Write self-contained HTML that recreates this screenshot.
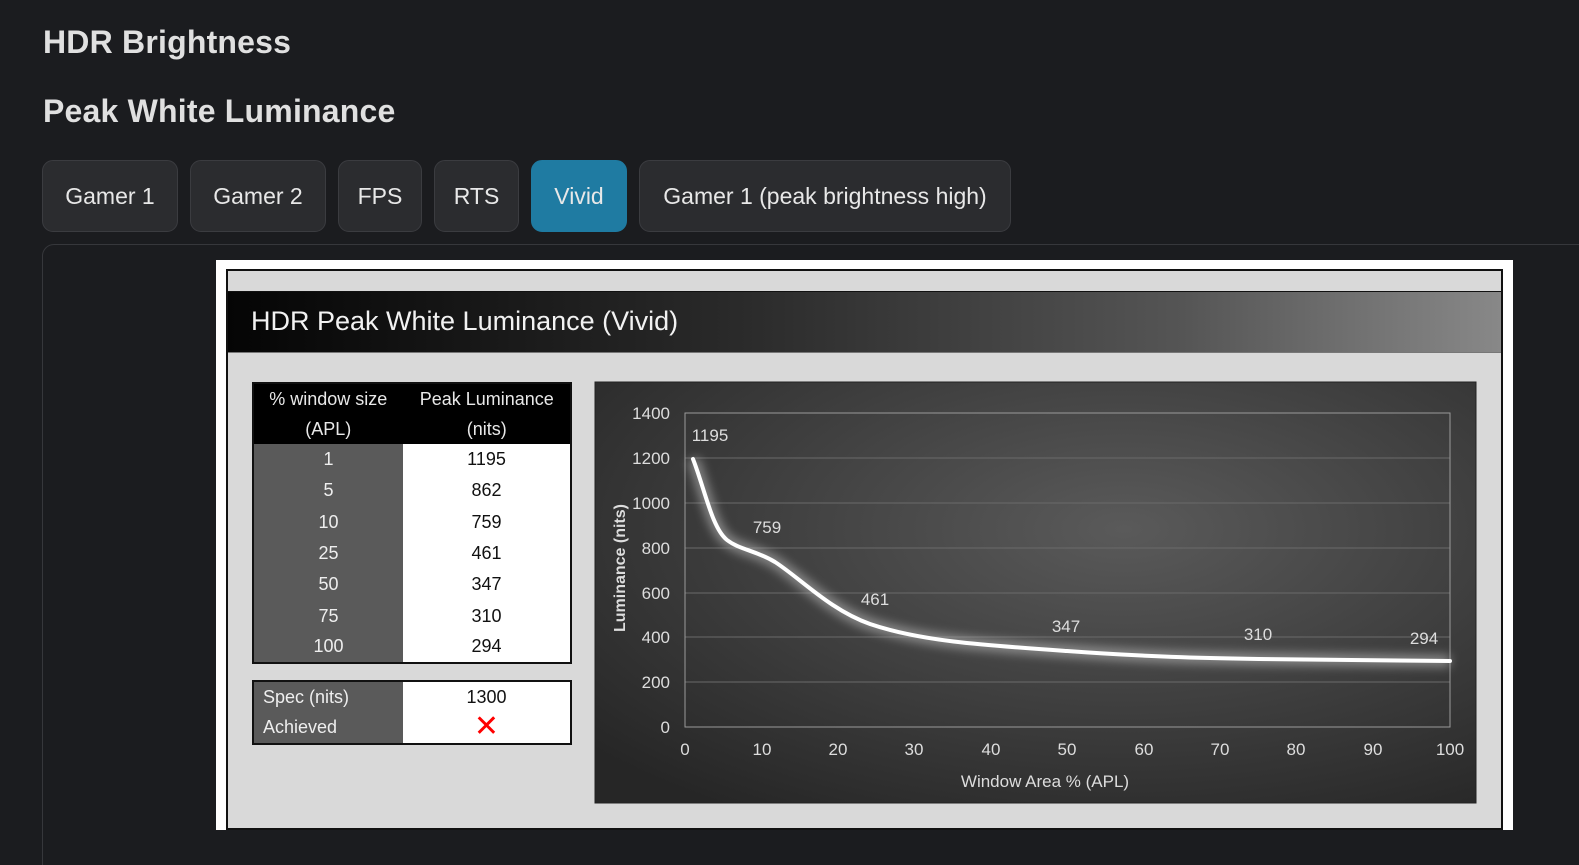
<!DOCTYPE html>
<html style="overflow:hidden;width:1579px;height:865px"><head><meta charset="utf-8"><style>
*{margin:0;padding:0;box-sizing:border-box}
body{width:1579px;height:865px;background:#1b1c1f;font-family:"Liberation Sans","DejaVu Sans",sans-serif;color:#e2e2e2;position:relative;overflow:hidden}
h1,h2{position:absolute;left:43px;font-weight:bold;font-size:32px;color:#e0e0e0;letter-spacing:0.2px}
h1{top:24px}h2{top:93px}
.tab{position:absolute;top:160px;height:72px;border-radius:11px;background:#2b2c2f;border:1px solid #3b3c40;color:#e8e8e8;font-size:23px;display:flex;align-items:center;justify-content:center}
.tab.on{background:#1f7ba2;border-color:#1f7ba2}
.panel{position:absolute;left:42px;top:244px;width:1560px;height:640px;border:1px solid #36373b;border-radius:12px}
.img{position:absolute;left:216px;top:260px;width:1297px;height:570px;background:#fff}
.frame{position:absolute;left:10px;top:9px;width:1277px;height:561px;border:2px solid #111;background:#d9d9d9}
.bar{position:absolute;left:0;top:20px;width:1273px;height:62px;background:linear-gradient(90deg,#050505 0%,#2a2a2a 40%,#555 75%,#888 100%);border-top:1px solid #111;border-bottom:1px solid #777}
.bar span{position:absolute;left:23px;top:14px;font-size:27px;color:#f2f2f2}
table{position:absolute;border-collapse:collapse;font-size:18px;text-align:center}
td{height:31.3px;padding:0}
.t1{left:24px;top:111px;width:320px;border:2px solid #111}
.t1 th{background:#000;color:#e8e8e8;font-weight:normal;height:61px;font-size:18px;line-height:30px}
.t1 td.l{background:#5a5a5a;color:#eee;width:150px}
.t1 td.r{background:#fff;color:#111}
.t2{left:24px;top:409px;width:320px;border:2px solid #111}
.t2 td.l{background:#5a5a5a;color:#eee;text-align:left;padding-left:9px;width:150px;height:31px}
.t2 td.r{background:#fff;color:#111}
</style></head><body>
<h1>HDR Brightness</h1>
<h2>Peak White Luminance</h2>
<div class="tab" style="left:42px;width:136px">Gamer 1</div>
<div class="tab" style="left:190px;width:136px">Gamer 2</div>
<div class="tab" style="left:338px;width:84px">FPS</div>
<div class="tab" style="left:434px;width:85px">RTS</div>
<div class="tab on" style="left:531px;width:96px">Vivid</div>
<div class="tab" style="left:639px;width:372px">Gamer 1 (peak brightness high)</div>
<div class="panel"></div>
<div class="img"><div class="frame">
<div class="bar"><span>HDR Peak White Luminance (Vivid)</span></div>
<table class="t1">
<tr><th style="border-right:1px solid #000">% window size<br>(APL)</th><th>Peak Luminance<br>(nits)</th></tr>
<tr><td class="l">1</td><td class="r">1195</td></tr>
<tr><td class="l">5</td><td class="r">862</td></tr>
<tr><td class="l">10</td><td class="r">759</td></tr>
<tr><td class="l">25</td><td class="r">461</td></tr>
<tr><td class="l">50</td><td class="r">347</td></tr>
<tr><td class="l">75</td><td class="r">310</td></tr>
<tr><td class="l">100</td><td class="r">294</td></tr>
</table>
<table class="t2">
<tr><td class="l">Spec (nits)</td><td class="r">1300</td></tr>
<tr><td class="l">Achieved</td><td class="r" style="color:#f00;font-size:30px;font-weight:bold;line-height:20px">✕</td></tr>
</table>
</div></div>
<svg style="position:absolute;left:0;top:0" width="1579" height="865">
<defs>
<radialGradient id="g" cx="0.6" cy="0.35" r="0.8"><stop offset="0" stop-color="#5a5a5a"/><stop offset="1" stop-color="#262626"/></radialGradient>
<filter id="bl"><feGaussianBlur stdDeviation="5"/></filter>
</defs>
<rect x="595" y="382" width="881" height="421" fill="url(#g)" stroke="#222"/>
<g stroke="#6a6a6a" stroke-width="1">
<line x1="685" y1="458" x2="1450" y2="458"/><line x1="685" y1="503" x2="1450" y2="503"/>
<line x1="685" y1="548" x2="1450" y2="548"/><line x1="685" y1="593" x2="1450" y2="593"/>
<line x1="685" y1="637" x2="1450" y2="637"/><line x1="685" y1="682" x2="1450" y2="682"/>
</g>
<rect x="685" y="413" width="765" height="314" fill="none" stroke="#9a9a9a"/>
<g font-size="17" fill="#ddd" text-anchor="end" font-family="Liberation Sans,sans-serif">
<text x="670" y="419">1400</text><text x="670" y="464">1200</text><text x="670" y="509">1000</text>
<text x="670" y="554">800</text><text x="670" y="599">600</text><text x="670" y="643">400</text>
<text x="670" y="688">200</text><text x="670" y="733">0</text>
</g>
<g font-size="17" fill="#ddd" text-anchor="middle" font-family="Liberation Sans,sans-serif">
<text x="685" y="755">0</text><text x="762" y="755">10</text><text x="838" y="755">20</text><text x="914" y="755">30</text>
<text x="991" y="755">40</text><text x="1067" y="755">50</text><text x="1144" y="755">60</text><text x="1220" y="755">70</text>
<text x="1296" y="755">80</text><text x="1373" y="755">90</text><text x="1450" y="755">100</text>
<text x="1045" y="787">Window Area % (APL)</text>
<text x="710" y="441">1195</text><text x="767" y="533">759</text><text x="875" y="605">461</text>
<text x="1066" y="632">347</text><text x="1258" y="640">310</text><text x="1424" y="644">294</text>
</g>
<text transform="translate(625,568) rotate(-90)" font-size="16" font-weight="bold" fill="#ddd" text-anchor="middle" font-family="Liberation Sans,sans-serif">Luminance (nits)</text>
<path d="M693 459 C705 490 712 528 727 540 C740 550 755 550 775 562 C800 578 830 610 870 624 C920 641 980 645 1067 651 C1150 657 1200 658 1259 659 C1330 660 1400 661 1450 661" fill="none" stroke="#bbb" stroke-width="12" filter="url(#bl)" opacity="0.6"/>
<path d="M693 459 C705 490 712 528 727 540 C740 550 755 550 775 562 C800 578 830 610 870 624 C920 641 980 645 1067 651 C1150 657 1200 658 1259 659 C1330 660 1400 661 1450 661" fill="none" stroke="#fff" stroke-width="4" stroke-linecap="round"/>
</svg>
</body></html>
